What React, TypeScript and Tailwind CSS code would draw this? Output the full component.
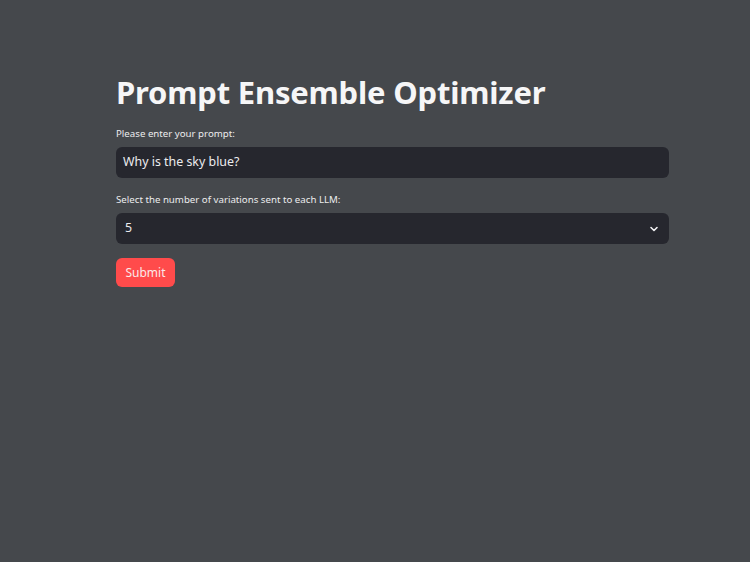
import React from 'react';

const App: React.FC = () => {
  return (
    <div
      className="min-h-[562px] w-full bg-[#45484c] text-[#e6e6e8]"
      style={{ fontFamily: '"Noto Sans", "Open Sans", sans-serif' }}
    >
      <div className="ml-[116px] w-[553px] pt-[70px]">
        <h1 className="text-[31px] font-bold leading-[44px] tracking-[-0.2px] text-[#f6f6f7]">
          Prompt Ensemble Optimizer
        </h1>

        <div className="mt-[13px]">
          <label className="block text-[9.7px] leading-[14px] text-[#ececee]">Please enter your prompt:</label>
          <div className="mt-[6px] flex h-[31px] items-center rounded-[6px] bg-[#26272e] px-[7px]">
            <span className="text-[12.4px] text-[#ececee]">Why is the sky blue?</span>
          </div>
        </div>

        <div className="mt-[15px]">
          <label className="block text-[9.7px] leading-[14px] text-[#ececee]">
            Select the number of variations sent to each LLM:
          </label>
          <div className="mt-[6px] flex h-[31px] items-center justify-between rounded-[6px] bg-[#26272e] pl-[9px] pr-[10px]">
            <span className="text-[12.4px] text-[#ececee]">5</span>
            <svg width="10" height="10" viewBox="0 0 10 10" fill="none">
              <path d="M2 3.5 L5 6.5 L8 3.5" stroke="#f0f0f2" strokeWidth="1.6" strokeLinecap="round" strokeLinejoin="round" />
            </svg>
          </div>
        </div>

        <button className="mt-[14px] h-[29px] w-[59px] rounded-[6px] bg-[#ff4b4b] text-[12px] text-[#fbe9e9]">
          Submit
        </button>
      </div>
    </div>
  );
};

export default App;
